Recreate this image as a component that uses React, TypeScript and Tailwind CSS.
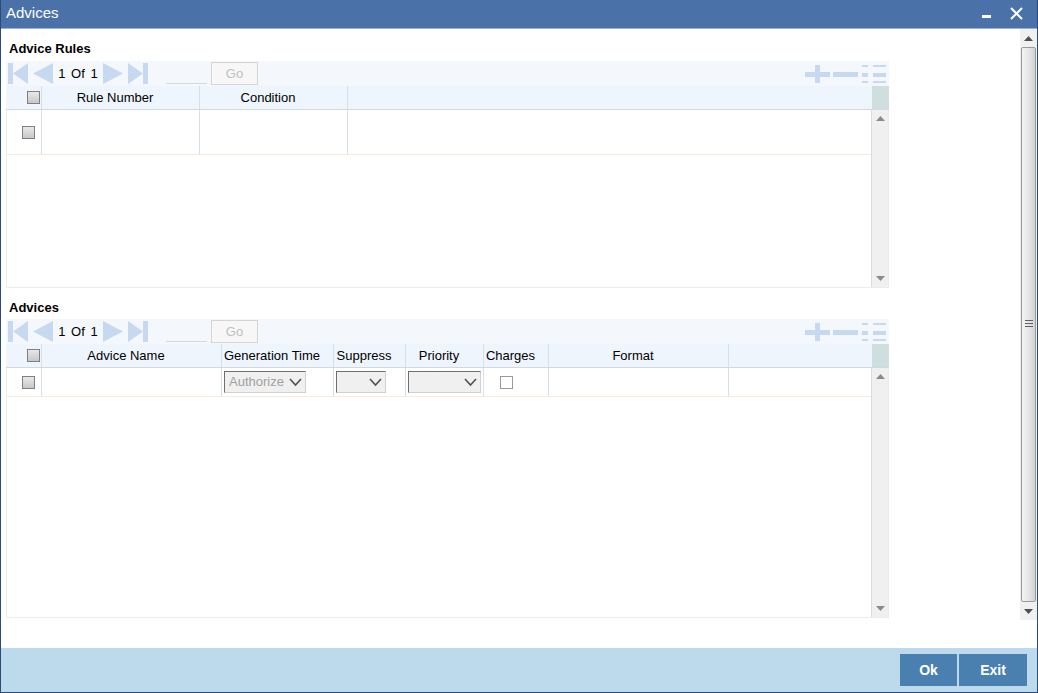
import React from 'react';

const FONT = { fontFamily: '"Liberation Sans", Arial, sans-serif' };

function NavIcon({ dir, bar }: { dir: 'left' | 'right'; bar?: boolean }) {
  return (
    <svg width="21" height="21" viewBox="0 0 21 21" className="shrink-0">
      {dir === 'left' ? (
        <>
          {bar && <rect x="0" y="0" width="5" height="21" fill="#c6d9f0" />}
          <polygon points={bar ? '20,0 20,21 5,10.5' : '20,0 20,21 0,10.5'} fill="#c6d9f0" />
        </>
      ) : (
        <>
          <polygon points={bar ? '0,0 0,21 15,10.5' : '0,0 0,21 20,10.5'} fill="#c6d9f0" />
          {bar && <rect x="15" y="0" width="5" height="21" fill="#c6d9f0" />}
        </>
      )}
    </svg>
  );
}

function GridTools() {
  return (
    <div className="flex items-center gap-[3px] pr-[3px]">
      <svg width="25" height="18" viewBox="0 0 25 18">
        <rect x="10" y="0" width="5" height="18" fill="#c6d9f0" />
        <rect x="0" y="7" width="25" height="5" fill="#c6d9f0" />
      </svg>
      <svg width="25" height="18" viewBox="0 0 25 18">
        <rect x="0" y="7" width="25" height="5" fill="#c6d9f0" />
      </svg>
      <svg width="25" height="18" viewBox="0 0 25 18">
        <rect x="1" y="0" width="6" height="2" fill="#c6d9f0" />
        <rect x="12" y="0" width="13" height="2" fill="#c6d9f0" />
        <rect x="1" y="8" width="6" height="4" fill="#c6d9f0" />
        <rect x="12" y="8" width="13" height="4" fill="#c6d9f0" />
        <rect x="1" y="16" width="6" height="2" fill="#c6d9f0" />
        <rect x="12" y="16" width="13" height="2" fill="#c6d9f0" />
      </svg>
    </div>
  );
}

function Toolbar() {
  return (
    <div className="h-[25px] bg-[#f4f8fd] flex items-center justify-between">
      <div className="flex items-center pl-[2px]">
        <NavIcon dir="left" bar />
        <div className="w-[4px]" />
        <NavIcon dir="left" />
        <span className="text-[13px] text-black ml-[4px] mr-[5px] w-[40px] text-center whitespace-nowrap [word-spacing:2px]">1 Of 1</span>
        <NavIcon dir="right" />
        <div className="w-[4px]" />
        <NavIcon dir="right" bar />
        <div className="ml-[17px] w-[41px] h-[21px] border-b border-[#d8d8d8]" />
        <div className="ml-[4px] w-[47px] h-[23px] border border-[#d4d4d4] bg-[#f7f7f7] text-[#c0c0c0] text-[13px] flex items-center justify-center">
          Go
        </div>
      </div>
      <GridTools />
    </div>
  );
}

function CheckBox() {
  return <div className="w-[13px] h-[13px] border border-[#808080] bg-gradient-to-b from-[#e8e8e8] to-[#c8c8c8]" />;
}

function Select({ w, text }: { w: number; text?: string }) {
  return (
    <div
      className="h-[22px] bg-[#f0f0f0] border border-t-[#707070] border-l-[#707070] border-b-[#d0d0d0] border-r-[#d0d0d0] flex items-center justify-between pl-[4px] pr-[3px]"
      style={{ width: w }}
    >
      <span className="text-[13px] text-[#a0a0a0]">{text}</span>
      <svg width="13" height="9" viewBox="0 0 13 9">
        <polyline points="1,1 6.5,7 12,1" fill="none" stroke="#505050" strokeWidth="1.6" />
      </svg>
    </div>
  );
}

function InnerScroll() {
  return (
    <div className="w-[17px] bg-[#f0f0f0] border-l border-[#dcdcdc] flex flex-col justify-between items-center py-[6px]">
      <svg width="9" height="5" viewBox="0 0 9 5"><polygon points="0,5 9,5 4.5,0" fill="#8a8a8a" /></svg>
      <svg width="9" height="5" viewBox="0 0 9 5"><polygon points="0,0 9,0 4.5,5" fill="#8a8a8a" /></svg>
    </div>
  );
}

type Col = { label: string; w: number };

function Grid({
  cols,
  rowH,
  bodyH,
  cells,
}: {
  cols: Col[];
  rowH: number;
  bodyH: number;
  cells: React.ReactNode[];
}) {
  return (
    <div className="w-[883px] flex flex-col">
      <Toolbar />
      <div className="flex h-[24px] bg-[#eef5fd] border-b border-[#cfd9e6]">
        <div className="w-[36px] border-r border-[#d6e0eb] flex items-center justify-end pr-[1px]">
          <CheckBox />
        </div>
        {cols.map((c, i) => (
          <div
            key={i}
            className="border-r border-[#d6e0eb] flex items-center justify-center pr-[11px] text-[13px] text-black whitespace-nowrap"
            style={{ width: c.w }}
          >
            {c.label}
          </div>
        ))}
        <div className="flex-1" />
        <div className="w-[17px] bg-[#cfdfe0]" />
      </div>
      <div className="flex border-x border-b border-[#ececec]" style={{ height: bodyH }}>
        <div className="flex-1 flex flex-col">
          <div className="flex border-b border-[#f7ebe0]" style={{ height: rowH }}>
            <div className="w-[35px] border-r border-[#d6e0eb] flex items-center justify-end pr-[6px]">
              <CheckBox />
            </div>
            {cols.map((c, i) => (
              <div
                key={i}
                className="border-r border-[#d6e0eb] flex items-center"
                style={{ width: c.w }}
              >
                {cells[i]}
              </div>
            ))}
            <div className="flex-1" />
          </div>
        </div>
        <InnerScroll />
      </div>
    </div>
  );
}

export default function App() {
  return (
    <div
      className="w-[1038px] h-[693px] bg-white flex flex-col border-x border-b border-[#2b4a7d] overflow-hidden"
      style={FONT}
    >
      <div className="h-[29px] bg-[#4a72a9] border-b border-[#9bb0c8] flex items-center justify-between pl-[5px] pr-[14px] pb-[1px] shrink-0">
        <span className="text-white text-[15px]">Advices</span>
        <div className="flex items-center gap-[19px]">
          <div className="w-[9px] h-[3px] bg-white mt-[6px]" />
          <svg width="13" height="13" viewBox="0 0 13 13">
            <path d="M1 1 L12 12 M12 1 L1 12" stroke="white" strokeWidth="2" />
          </svg>
        </div>
      </div>

      <div className="flex h-[591px] shrink-0">
        <div className="flex-1 pl-[5px] flex flex-col">
          <div className="pt-[12px] pl-[3px] h-[32px] text-[13px] font-bold text-black leading-[16px]">Advice Rules</div>
          <Grid
            cols={[
              { label: 'Rule Number', w: 158 },
              { label: 'Condition', w: 148 },
            ]}
            rowH={45}
            bodyH={178}
            cells={[null, null]}
          />
          <div className="pt-[12px] pl-[3px] h-[31px] text-[13px] font-bold text-black leading-[16px]">Advices</div>
          <Grid
            cols={[
              { label: 'Advice Name', w: 180 },
              { label: 'Generation Time', w: 112 },
              { label: 'Suppress', w: 72 },
              { label: 'Priority', w: 78 },
              { label: 'Charges', w: 65 },
              { label: 'Format', w: 180 },
            ]}
            rowH={29}
            bodyH={250}
            cells={[
              null,
              <div className="pl-[2px]"><Select w={82} text="Authorize" /></div>,
              <div className="pl-[2px]"><Select w={50} /></div>,
              <div className="pl-[2px]"><Select w={73} /></div>,
              <div className="pl-[16px]"><div className="w-[13px] h-[13px] border border-[#9a9a9a] bg-white" /></div>,
              null,
            ]}
          />
        </div>

        <div className="w-[17px] bg-[#f0f0f0] flex flex-col items-center pt-[1px] pb-[1px] shrink-0">
          <div className="h-[16px] flex items-center justify-center">
            <svg width="9" height="5" viewBox="0 0 9 5"><polygon points="0,5 9,5 4.5,0" fill="#505050" /></svg>
          </div>
          <div className="w-[15px] flex-1 my-[1px] border border-[#9a9a9a] rounded-[2px] bg-gradient-to-r from-[#f4f4f4] via-[#e6e6e6] to-[#d2d2d2] flex items-center justify-center">
            <svg width="8" height="9" viewBox="0 0 8 9">
              <rect x="0" y="0" width="8" height="1" fill="#606060" />
              <rect x="0" y="3" width="8" height="1" fill="#606060" />
              <rect x="0" y="6" width="8" height="1" fill="#606060" />
            </svg>
          </div>
          <div className="h-[16px] flex items-center justify-center">
            <svg width="9" height="5" viewBox="0 0 9 5"><polygon points="0,0 9,0 4.5,5" fill="#505050" /></svg>
          </div>
        </div>
      </div>

      <div className="flex-1" />

      <div className="h-[44px] bg-[#bdd9ec] flex items-center justify-end pr-[10px] gap-[2px] shrink-0">
        <div className="w-[57px] h-[32px] bg-[#4a80b0] text-white font-bold text-[14px] flex items-center justify-center">Ok</div>
        <div className="w-[68px] h-[32px] bg-[#4a80b0] text-white font-bold text-[14px] flex items-center justify-center">Exit</div>
      </div>
    </div>
  );
}
